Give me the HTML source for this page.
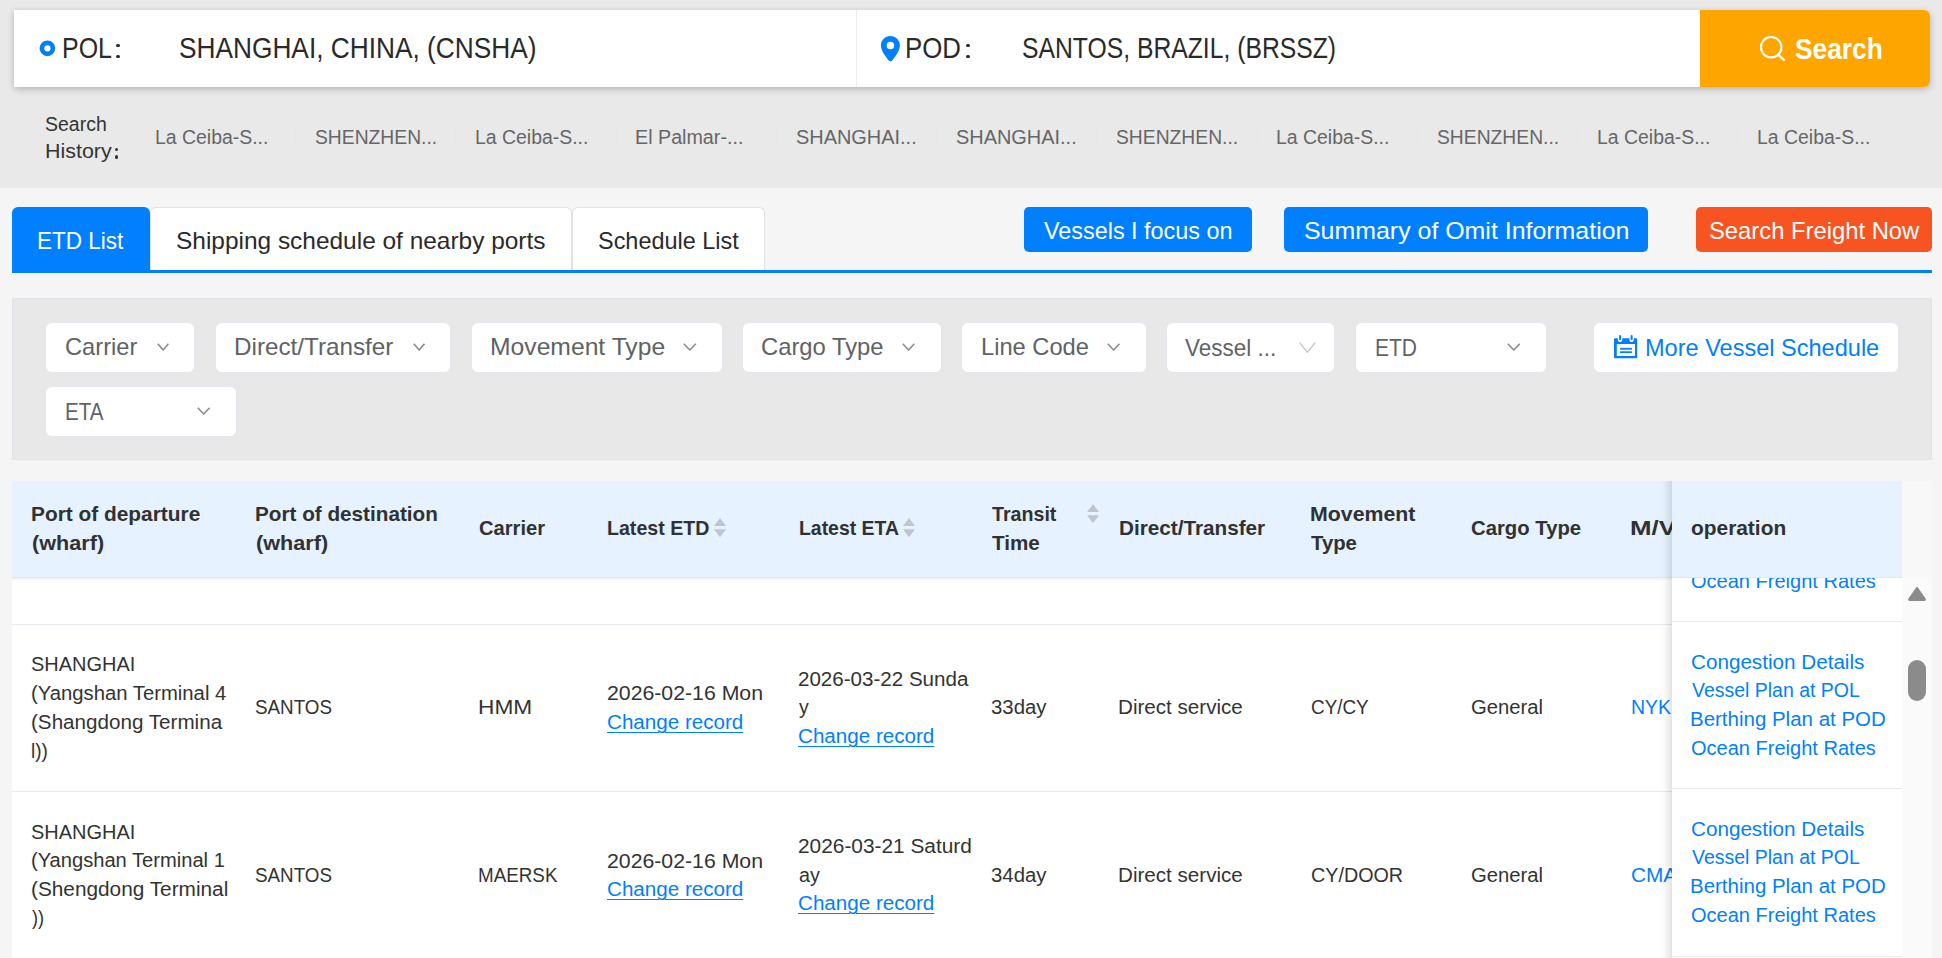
<!DOCTYPE html><html><head><meta charset="utf-8"><title>Shipping schedule</title><style>
html,body{margin:0;padding:0}body{width:1942px;height:958px;overflow:hidden;position:relative;background:#f5f5f5;font-family:"Liberation Sans",sans-serif}
.a{position:absolute;display:block}.t{position:absolute;white-space:pre;line-height:1;transform-origin:0 50%}
.dd{position:absolute;background:#fff;border:1px solid #e4e7ed;border-radius:7px;box-sizing:border-box}
</style></head><body>
<div class="a" style="left:0px;top:0px;width:1942px;height:188px;background:#e9e9e9"></div>
<div class="a" style="left:14px;top:10px;width:1916px;height:77px;background:#fff;border-radius:0 6px 6px 0;box-shadow:0 2px 7px rgba(0,0,0,.24)"></div>
<div class="a" style="left:856px;top:10px;width:1px;height:77px;background:#ececec"></div>
<div class="a" style="left:1700px;top:10px;width:230px;height:77px;background:#ffa500;border-radius:0 6px 6px 0"></div>
<svg class="a" style="left:39px;top:40px" width="17" height="17" viewBox="0 0 17 17"><circle cx="8.4" cy="8.3" r="5.5" fill="none" stroke="#0080ff" stroke-width="4.7"/></svg>
<svg class="a" style="left:880px;top:35px" width="21" height="27" viewBox="0 0 21 27"><path fill-rule="evenodd" fill="#0080ff" d="M10.4 0.9C5.1 0.9 0.9 5.1 0.9 10.4C0.9 13.2 2.3 16 3.9 18.9L8.2 25C9.3 26.6 11.5 26.6 12.6 25L16.9 18.9C18.5 16 19.9 13.2 19.9 10.4C19.9 5.1 15.7 0.9 10.4 0.9ZM10.4 6.65A3.75 3.75 0 1 1 10.4 14.15A3.75 3.75 0 1 1 10.4 6.65Z"/></svg>
<svg class="a" style="left:1758px;top:34px" width="30" height="30" viewBox="0 0 30 30"><circle cx="13.2" cy="13.2" r="10.2" fill="none" stroke="#fff" stroke-width="2.2"/><path d="M20.6 21.2L25.9 25.8" stroke="#fff" stroke-width="2.4" stroke-linecap="round"/></svg>
<div class="a" style="left:116.2px;top:43.5px;width:3.8px;height:3.8px;background:#2a2a2a;border-radius:50%"></div>
<div class="a" style="left:116.2px;top:54.6px;width:3.8px;height:3.8px;background:#2a2a2a;border-radius:50%"></div>
<div class="a" style="left:966.1px;top:43.5px;width:3.8px;height:3.8px;background:#2a2a2a;border-radius:50%"></div>
<div class="a" style="left:966.1px;top:54.6px;width:3.8px;height:3.8px;background:#2a2a2a;border-radius:50%"></div>
<div class="a" style="left:115px;top:147.7px;width:3.4px;height:3.4px;background:#333;border-radius:50%"></div>
<div class="a" style="left:115px;top:155.3px;width:3.4px;height:3.4px;background:#333;border-radius:50%"></div>
<div class="a" style="left:295.2px;top:126px;width:1px;height:22px;background:#e4e6ea"></div>
<div class="a" style="left:455.42px;top:126px;width:1px;height:22px;background:#e4e6ea"></div>
<div class="a" style="left:615.64px;top:126px;width:1px;height:22px;background:#e4e6ea"></div>
<div class="a" style="left:775.86px;top:126px;width:1px;height:22px;background:#e4e6ea"></div>
<div class="a" style="left:936.08px;top:126px;width:1px;height:22px;background:#e4e6ea"></div>
<div class="a" style="left:1096.3px;top:126px;width:1px;height:22px;background:#e4e6ea"></div>
<div class="a" style="left:1256.52px;top:126px;width:1px;height:22px;background:#e4e6ea"></div>
<div class="a" style="left:1416.74px;top:126px;width:1px;height:22px;background:#e4e6ea"></div>
<div class="a" style="left:1576.96px;top:126px;width:1px;height:22px;background:#e4e6ea"></div>
<div class="a" style="left:1737.18px;top:126px;width:1px;height:22px;background:#e4e6ea"></div>
<div class="a" style="left:12px;top:270px;width:1920px;height:3px;background:#0080ff"></div>
<div class="a" style="left:12px;top:207px;width:138px;height:64px;background:#0080ff;border-radius:6px 6px 0 0"></div>
<div class="a" style="left:150px;top:207px;width:421.5px;height:63px;background:#fff;border:1px solid #dee2e6;border-bottom:none;border-radius:6px 6px 0 0;box-sizing:border-box"></div>
<div class="a" style="left:571.5px;top:207px;width:193.5px;height:63px;background:#fff;border:1px solid #dee2e6;border-bottom:none;border-radius:6px 6px 0 0;box-sizing:border-box"></div>
<div class="a" style="left:1024px;top:207px;width:228px;height:45px;background:#0080ff;border-radius:5px"></div>
<div class="a" style="left:1284px;top:207px;width:364px;height:45px;background:#0080ff;border-radius:5px"></div>
<div class="a" style="left:1696px;top:207px;width:236px;height:45px;background:#f85421;border-radius:5px"></div>
<div class="a" style="left:12px;top:298px;width:1920px;height:162px;background:#e8e8e8;border:1px solid #e0e3e9;box-sizing:border-box"></div>
<div class="dd" style="left:45px;top:322px;width:150px;height:51px"></div>
<svg class="a" style="left:157px;top:342.8px" width="12.2" height="8.1" viewBox="0 0 12.2 8.1"><path d="M0.80 0.80L6.10 6.98L11.40 0.80" fill="none" stroke="#8c8c8c" stroke-width="1.6" stroke-linejoin="miter"/></svg>
<div class="dd" style="left:215px;top:322px;width:236px;height:51px"></div>
<svg class="a" style="left:412.5px;top:342.8px" width="12.3" height="8.1" viewBox="0 0 12.3 8.1"><path d="M0.80 0.80L6.15 6.98L11.50 0.80" fill="none" stroke="#8c8c8c" stroke-width="1.6" stroke-linejoin="miter"/></svg>
<div class="dd" style="left:471px;top:322px;width:252px;height:51px"></div>
<svg class="a" style="left:683px;top:342.8px" width="13.7" height="8.1" viewBox="0 0 13.7 8.1"><path d="M0.80 0.80L6.85 6.98L12.90 0.80" fill="none" stroke="#8c8c8c" stroke-width="1.6" stroke-linejoin="miter"/></svg>
<div class="dd" style="left:742px;top:322px;width:200px;height:51px"></div>
<svg class="a" style="left:902.4px;top:342.8px" width="13.1" height="8.1" viewBox="0 0 13.1 8.1"><path d="M0.80 0.80L6.55 6.98L12.30 0.80" fill="none" stroke="#8c8c8c" stroke-width="1.6" stroke-linejoin="miter"/></svg>
<div class="dd" style="left:961px;top:322px;width:186px;height:51px"></div>
<svg class="a" style="left:1107.4px;top:342.8px" width="13.3" height="8.1" viewBox="0 0 13.3 8.1"><path d="M0.80 0.80L6.65 6.98L12.50 0.80" fill="none" stroke="#8c8c8c" stroke-width="1.6" stroke-linejoin="miter"/></svg>
<div class="dd" style="left:1166px;top:322px;width:169px;height:51px"></div>
<div class="dd" style="left:1355px;top:322px;width:192px;height:51px"></div>
<svg class="a" style="left:1506.9px;top:342.8px" width="13.6" height="8.1" viewBox="0 0 13.6 8.1"><path d="M0.80 0.80L6.80 6.98L12.80 0.80" fill="none" stroke="#8c8c8c" stroke-width="1.6" stroke-linejoin="miter"/></svg>
<svg class="a" style="left:1299.1px;top:341.9px" width="16.8" height="11.3" viewBox="0 0 16.8 11.3"><path d="M0.65 0.65L8.40 10.39L16.15 0.65" fill="none" stroke="#c0c4cc" stroke-width="1.3" stroke-linejoin="miter"/></svg>
<div class="dd" style="left:45px;top:386px;width:192px;height:51px"></div>
<svg class="a" style="left:197px;top:406.8px" width="13.4" height="8.1" viewBox="0 0 13.4 8.1"><path d="M0.80 0.80L6.70 6.98L12.60 0.80" fill="none" stroke="#8c8c8c" stroke-width="1.6" stroke-linejoin="miter"/></svg>
<div class="dd" style="left:1593px;top:322px;width:306px;height:51px"></div>
<svg class="a" style="left:1613px;top:334px" width="26" height="26" viewBox="0 0 26 26"><path fill="#0080ff" fill-rule="evenodd" d="M2 4.3H23.2A1 1 0 0 1 24.2 5.3V23.2A1 1 0 0 1 23.2 24.2H2A1 1 0 0 1 1 23.2V5.3A1 1 0 0 1 2 4.3ZM3.8 10.1V22.1H22V10.1Z"/><rect x="4.9" y="0.5" width="4.4" height="7.4" rx="2.2" fill="#fff"/><rect x="16.4" y="0.5" width="4.4" height="7.4" rx="2.2" fill="#fff"/><rect x="6.1" y="1" width="2" height="5.2" rx="1" fill="#0080ff"/><rect x="17.6" y="1" width="2" height="5.2" rx="1" fill="#0080ff"/><rect x="7" y="13.9" width="11.9" height="1.8" fill="#0080ff"/><rect x="7" y="17.3" width="11.9" height="1.8" fill="#0080ff"/></svg>
<div class="a" style="left:12px;top:481px;width:1890px;height:477px;background:#fff"></div>
<div class="a" style="left:12px;top:481px;width:1890px;height:96px;background:#e6f2ff"></div>
<div class="a" style="left:12px;top:577px;width:1890px;height:1px;background:#dfe6ec"></div>
<div class="a" style="left:12px;top:578px;width:1660px;height:3px;background:linear-gradient(#f1f1f1,#fff)"></div>
<div class="a" style="left:12px;top:624px;width:1660px;height:1.3px;background:#e6e9f0"></div>
<div class="a" style="left:12px;top:791.2px;width:1660px;height:1.3px;background:#e6e9f0"></div>
<svg class="a" style="left:714.4px;top:518.1px" width="12" height="19.2" viewBox="0 0 12 19.2"><path d="M6 0L12 8.1H0Z" fill="#c0c4cc"/><path d="M0 11.2H12L6 19.2Z" fill="#c0c4cc"/></svg>
<svg class="a" style="left:903.1px;top:518.1px" width="12" height="19.2" viewBox="0 0 12 19.2"><path d="M6 0L12 8.1H0Z" fill="#c0c4cc"/><path d="M0 11.2H12L6 19.2Z" fill="#c0c4cc"/></svg>
<svg class="a" style="left:1087.2px;top:503.9px" width="12" height="19.2" viewBox="0 0 12 19.2"><path d="M6 0L12 8.1H0Z" fill="#c0c4cc"/><path d="M0 11.2H12L6 19.2Z" fill="#c0c4cc"/></svg>
<span class="t" style="left:62.25px;top:33.9px;font-size:28.8px;color:#2a2a2a;transform:scaleX(0.8661);">POL</span>
<span class="t" style="left:178.76px;top:33.9px;font-size:28.8px;color:#2a2a2a;transform:scaleX(0.9121);">SHANGHAI, CHINA, (CNSHA)</span>
<span class="t" style="left:905.49px;top:33.9px;font-size:28.8px;color:#2a2a2a;transform:scaleX(0.8953);">POD</span>
<span class="t" style="left:1021.93px;top:33.9px;font-size:28.8px;color:#2a2a2a;transform:scaleX(0.8584);">SANTOS, BRAZIL, (BRSSZ)</span>
<span class="t" style="left:1794.91px;top:34.05px;font-size:29.5px;color:#fff;transform:scaleX(0.8921);font-weight:bold;">Search</span>
<span class="t" style="left:45.23px;top:114.3px;font-size:20px;color:#333;transform:scaleX(0.9738);">Search</span>
<span class="t" style="left:45.03px;top:141.3px;font-size:20px;color:#333;transform:scaleX(1.0711);">History</span>
<span class="t" style="left:154.8px;top:127.3px;font-size:20px;color:#666;transform:scaleX(0.9713);">La Ceiba-S...</span>
<span class="t" style="left:314.96px;top:127.3px;font-size:20px;color:#666;transform:scaleX(0.9640);">SHENZHEN...</span>
<span class="t" style="left:475.24px;top:127.3px;font-size:20px;color:#666;transform:scaleX(0.9713);">La Ceiba-S...</span>
<span class="t" style="left:635.44px;top:127.3px;font-size:20px;color:#666;transform:scaleX(0.9850);">El Palmar-...</span>
<span class="t" style="left:795.78px;top:127.3px;font-size:20px;color:#666;transform:scaleX(0.9962);">SHANGHAI...</span>
<span class="t" style="left:956px;top:127.3px;font-size:20px;color:#666;transform:scaleX(0.9962);">SHANGHAI...</span>
<span class="t" style="left:1116.06px;top:127.3px;font-size:20px;color:#666;transform:scaleX(0.9640);">SHENZHEN...</span>
<span class="t" style="left:1276.34px;top:127.3px;font-size:20px;color:#666;transform:scaleX(0.9713);">La Ceiba-S...</span>
<span class="t" style="left:1436.5px;top:127.3px;font-size:20px;color:#666;transform:scaleX(0.9640);">SHENZHEN...</span>
<span class="t" style="left:1596.78px;top:127.3px;font-size:20px;color:#666;transform:scaleX(0.9713);">La Ceiba-S...</span>
<span class="t" style="left:1757px;top:127.3px;font-size:20px;color:#666;transform:scaleX(0.9713);">La Ceiba-S...</span>
<span class="t" style="left:37.23px;top:228.8px;font-size:24px;color:#fff;transform:scaleX(0.9370);">ETD List</span>
<span class="t" style="left:175.83px;top:228.8px;font-size:24px;color:#2a2a2a;transform:scaleX(1.0182);">Shipping schedule of nearby ports</span>
<span class="t" style="left:597.78px;top:228.8px;font-size:24px;color:#2a2a2a;transform:scaleX(0.9765);">Schedule List</span>
<span class="t" style="left:1044.06px;top:218.55px;font-size:24.5px;color:#fff;transform:scaleX(0.9548);">Vessels I focus on</span>
<span class="t" style="left:1303.73px;top:218.55px;font-size:24.5px;color:#fff;transform:scaleX(1.0170);">Summary of Omit Information</span>
<span class="t" style="left:1708.59px;top:218.55px;font-size:24.5px;color:#fff;transform:scaleX(0.9710);">Search Freight Now</span>
<span class="t" style="left:64.67px;top:334.8px;font-size:24px;color:#606266;transform:scaleX(0.9868);">Carrier</span>
<span class="t" style="left:233.58px;top:334.8px;font-size:24px;color:#606266;transform:scaleX(1.0096);">Direct/Transfer</span>
<span class="t" style="left:489.64px;top:334.8px;font-size:24px;color:#606266;transform:scaleX(1.0284);">Movement Type</span>
<span class="t" style="left:761.06px;top:334.8px;font-size:24px;color:#606266;transform:scaleX(0.9913);">Cargo Type</span>
<span class="t" style="left:980.53px;top:334.8px;font-size:24px;color:#606266;transform:scaleX(0.9864);">Line Code</span>
<span class="t" style="left:1184.87px;top:335.8px;font-size:24px;color:#606266;transform:scaleX(0.9358);">Vessel ...</span>
<span class="t" style="left:1375.15px;top:335.8px;font-size:24px;color:#606266;transform:scaleX(0.8737);">ETD</span>
<span class="t" style="left:1645.24px;top:335.8px;font-size:24px;color:#0080ff;transform:scaleX(0.9807);">More Vessel Schedule</span>
<span class="t" style="left:65.49px;top:399.8px;font-size:24px;color:#606266;transform:scaleX(0.8561);">ETA</span>
<span class="t" style="left:31.22px;top:504.1px;font-size:20.4px;color:#303133;transform:scaleX(1.0232);font-weight:bold;">Port of departure</span>
<span class="t" style="left:32.24px;top:533.1px;font-size:20.4px;color:#303133;transform:scaleX(1.0606);font-weight:bold;">(wharf)</span>
<span class="t" style="left:255.23px;top:504.1px;font-size:20.4px;color:#303133;transform:scaleX(1.0152);font-weight:bold;">Port of destination</span>
<span class="t" style="left:256.24px;top:533.1px;font-size:20.4px;color:#303133;transform:scaleX(1.0606);font-weight:bold;">(wharf)</span>
<span class="t" style="left:478.86px;top:518.1px;font-size:20.4px;color:#303133;transform:scaleX(0.9871);font-weight:bold;">Carrier</span>
<span class="t" style="left:606.6px;top:518.1px;font-size:20.4px;color:#303133;transform:scaleX(0.9612);font-weight:bold;">Latest ETD</span>
<span class="t" style="left:799.01px;top:518.1px;font-size:20.4px;color:#303133;transform:scaleX(0.9521);font-weight:bold;">Latest ETA</span>
<span class="t" style="left:991.76px;top:504.1px;font-size:20.4px;color:#303133;transform:scaleX(0.9630);font-weight:bold;">Transit</span>
<span class="t" style="left:991.75px;top:533.1px;font-size:20.4px;color:#303133;transform:scaleX(1.0119);font-weight:bold;">Time</span>
<span class="t" style="left:1118.63px;top:518.1px;font-size:20.4px;color:#303133;transform:scaleX(1.0154);font-weight:bold;">Direct/Transfer</span>
<span class="t" style="left:1310.39px;top:504.1px;font-size:20.4px;color:#303133;transform:scaleX(1.0458);font-weight:bold;">Movement</span>
<span class="t" style="left:1311.45px;top:533.1px;font-size:20.4px;color:#303133;transform:scaleX(0.9967);font-weight:bold;">Type</span>
<span class="t" style="left:1470.85px;top:518.1px;font-size:20.4px;color:#303133;transform:scaleX(0.9950);font-weight:bold;">Cargo Type</span>
<span class="t" style="left:30.8px;top:654.3px;font-size:20px;color:#333;transform:scaleX(0.9985);">SHANGHAI</span>
<span class="t" style="left:30.53px;top:683.3px;font-size:20px;color:#333;transform:scaleX(1.0134);">(Yangshan Terminal 4</span>
<span class="t" style="left:30.51px;top:712.3px;font-size:20px;color:#333;transform:scaleX(1.0315);">(Shangdong Termina</span>
<span class="t" style="left:30.61px;top:741.3px;font-size:20px;color:#333;transform:scaleX(0.9508);">l))</span>
<span class="t" style="left:254.86px;top:697.3px;font-size:20px;color:#333;transform:scaleX(0.9400);">SANTOS</span>
<span class="t" style="left:478.01px;top:697.3px;font-size:20px;color:#333;transform:scaleX(1.1348);">HMM</span>
<span class="t" style="left:606.94px;top:683.3px;font-size:20px;color:#333;transform:scaleX(1.0630);">2026-02-16 Mon</span>
<span class="t" style="left:606.97px;top:712.3px;font-size:20px;color:#0080ff;transform:scaleX(1.0300);text-decoration:underline;text-decoration-thickness:1.3px;text-underline-offset:2.5px;">Change record</span>
<span class="t" style="left:798.27px;top:669.3px;font-size:20px;color:#333;transform:scaleX(1.0282);">2026-03-22 Sunda</span>
<span class="t" style="left:799.36px;top:697.3px;font-size:20px;color:#333;transform:scaleX(0.9744);">y</span>
<span class="t" style="left:798.27px;top:726.3px;font-size:20px;color:#0080ff;transform:scaleX(1.0300);text-decoration:underline;text-decoration-thickness:1.3px;text-underline-offset:2.5px;">Change record</span>
<span class="t" style="left:990.84px;top:697.3px;font-size:20px;color:#333;transform:scaleX(1.0177);">33day</span>
<span class="t" style="left:1118.3px;top:697.3px;font-size:20px;color:#333;transform:scaleX(1.0304);">Direct service</span>
<span class="t" style="left:1310.76px;top:697.3px;font-size:20px;color:#333;transform:scaleX(0.9439);">CY/CY</span>
<span class="t" style="left:1470.59px;top:697.3px;font-size:20px;color:#333;transform:scaleX(1.0124);">General</span>
<span class="t" style="left:30.8px;top:822.3px;font-size:20px;color:#333;transform:scaleX(0.9985);">SHANGHAI</span>
<span class="t" style="left:30.54px;top:850.3px;font-size:20px;color:#333;transform:scaleX(1.0058);">(Yangshan Terminal 1</span>
<span class="t" style="left:30.5px;top:879.3px;font-size:20px;color:#333;transform:scaleX(1.0398);">(Shengdong Terminal</span>
<span class="t" style="left:31.57px;top:908.3px;font-size:20px;color:#333;transform:scaleX(0.9021);">))</span>
<span class="t" style="left:254.86px;top:865.3px;font-size:20px;color:#333;transform:scaleX(0.9400);">SANTOS</span>
<span class="t" style="left:478.35px;top:865.3px;font-size:20px;color:#333;transform:scaleX(0.9406);">MAERSK</span>
<span class="t" style="left:606.94px;top:851.3px;font-size:20px;color:#333;transform:scaleX(1.0630);">2026-02-16 Mon</span>
<span class="t" style="left:606.97px;top:879.3px;font-size:20px;color:#0080ff;transform:scaleX(1.0300);text-decoration:underline;text-decoration-thickness:1.3px;text-underline-offset:2.5px;">Change record</span>
<span class="t" style="left:798.26px;top:836.3px;font-size:20px;color:#333;transform:scaleX(1.0426);">2026-03-21 Saturd</span>
<span class="t" style="left:798.86px;top:865.3px;font-size:20px;color:#333;transform:scaleX(0.9877);">ay</span>
<span class="t" style="left:798.27px;top:893.3px;font-size:20px;color:#0080ff;transform:scaleX(1.0300);text-decoration:underline;text-decoration-thickness:1.3px;text-underline-offset:2.5px;">Change record</span>
<span class="t" style="left:990.84px;top:865.3px;font-size:20px;color:#333;transform:scaleX(1.0177);">34day</span>
<span class="t" style="left:1118.3px;top:865.3px;font-size:20px;color:#333;transform:scaleX(1.0304);">Direct service</span>
<span class="t" style="left:1310.71px;top:865.3px;font-size:20px;color:#333;transform:scaleX(0.9863);">CY/DOOR</span>
<span class="t" style="left:1470.59px;top:865.3px;font-size:20px;color:#333;transform:scaleX(1.0124);">General</span>
<span class="t" style="left:1630.42px;top:518.1px;font-size:20.4px;color:#303133;transform:scaleX(1.2662);font-weight:bold;">M/V</span>
<span class="t" style="left:1630.59px;top:697.3px;font-size:20px;color:#0080ff;transform:scaleX(0.9744);">NYK</span>
<span class="t" style="left:1631.26px;top:865.3px;font-size:20px;color:#0080ff;transform:scaleX(1.0405);">CMA</span>
<div class="a" style="left:1642px;top:481px;width:260px;height:477px;overflow:hidden"><div class="a" style="left:30px;top:-20px;width:260px;height:520px;background:#fff;box-shadow:-1px 0 11px rgba(0,0,0,.2)"></div></div>
<span class="t" style="left:1690.87px;top:484.3px;font-size:20px;color:#0080ff;transform:scaleX(1.0328);">Congestion Details</span>
<span class="t" style="left:1691.66px;top:513.3px;font-size:20px;color:#0080ff;transform:scaleX(0.9738);">Vessel Plan at POL</span>
<span class="t" style="left:1690.11px;top:542.3px;font-size:20px;color:#0080ff;transform:scaleX(1.0239);">Berthing Plan at POD</span>
<span class="t" style="left:1690.9px;top:571.3px;font-size:20px;color:#0080ff;transform:scaleX(1.0014);">Ocean Freight Rates</span>
<span class="t" style="left:1690.87px;top:652.3px;font-size:20px;color:#0080ff;transform:scaleX(1.0328);">Congestion Details</span>
<span class="t" style="left:1691.66px;top:680.3px;font-size:20px;color:#0080ff;transform:scaleX(0.9738);">Vessel Plan at POL</span>
<span class="t" style="left:1690.11px;top:709.3px;font-size:20px;color:#0080ff;transform:scaleX(1.0239);">Berthing Plan at POD</span>
<span class="t" style="left:1690.9px;top:738.3px;font-size:20px;color:#0080ff;transform:scaleX(1.0014);">Ocean Freight Rates</span>
<span class="t" style="left:1690.87px;top:819.3px;font-size:20px;color:#0080ff;transform:scaleX(1.0328);">Congestion Details</span>
<span class="t" style="left:1691.66px;top:847.3px;font-size:20px;color:#0080ff;transform:scaleX(0.9738);">Vessel Plan at POL</span>
<span class="t" style="left:1690.11px;top:876.3px;font-size:20px;color:#0080ff;transform:scaleX(1.0239);">Berthing Plan at POD</span>
<span class="t" style="left:1690.9px;top:905.3px;font-size:20px;color:#0080ff;transform:scaleX(1.0014);">Ocean Freight Rates</span>
<div class="a" style="left:1672px;top:621px;width:230px;height:1.3px;background:#e6e9f0"></div>
<div class="a" style="left:1672px;top:788px;width:230px;height:1.3px;background:#e6e9f0"></div>
<div class="a" style="left:1672px;top:955.6px;width:230px;height:1.3px;background:#e6e9f0"></div>
<div class="a" style="left:1672px;top:481px;width:230px;height:96px;background:#e6f2ff"></div>
<div class="a" style="left:1672px;top:577px;width:230px;height:1px;background:#dfe6ec"></div>
<span class="t" style="left:1691.43px;top:518.1px;font-size:20.4px;color:#303133;transform:scaleX(1.0242);font-weight:bold;">operation</span>
<div class="a" style="left:1902px;top:481px;width:30px;height:477px;background:#fafafa"></div>
<div class="a" style="left:1902px;top:481px;width:30px;height:97px;background:#f8f8f8"></div>
<svg class="a" style="left:1907px;top:586px" width="20" height="16" viewBox="0 0 20 16"><path d="M10 2.4L17.6 13.6H2.4Z" fill="#8b8b8b" stroke="#8b8b8b" stroke-width="2.6" stroke-linejoin="round"/></svg>
<div class="a" style="left:1908px;top:660px;width:17.7px;height:41px;background:#8b8b8b;border-radius:9px"></div>
</body></html>
